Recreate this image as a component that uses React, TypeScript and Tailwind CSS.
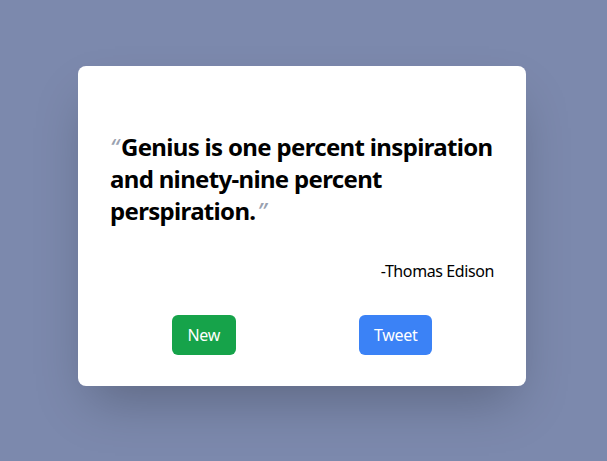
export default function App() {
  return (
    <div
      className="flex min-h-screen items-center justify-center bg-[#7c89ad] pb-[9px] pr-[3px]"
      style={{ fontFamily: '"Noto Sans", "Open Sans", sans-serif' }}
    >
      <div className="h-80 w-[448px] rounded-lg bg-white px-8 pb-8 pt-[65px] shadow-2xl">
        <p className="text-2xl font-bold leading-8 tracking-[-0.028em] text-black">
          <span className="mr-[3px] font-normal italic text-gray-400">“</span>
          Genius is one percent inspiration and ninety-nine percent perspiration.
          <span className="ml-[2px] font-normal italic text-gray-400">”</span>
        </p>
        <p className="mt-8 text-right text-base leading-6 tracking-[-0.025em] text-black">-Thomas Edison</p>
        <div className="mt-8 flex justify-around">
          <button className="h-10 w-16 rounded-md bg-[#16a34a] text-base tracking-[-0.02em] text-white">New</button>
          <button className="h-10 w-[73px] rounded-md bg-[#3b82f6] text-base tracking-[-0.02em] text-white">
            Tweet
          </button>
        </div>
      </div>
    </div>
  );
}
